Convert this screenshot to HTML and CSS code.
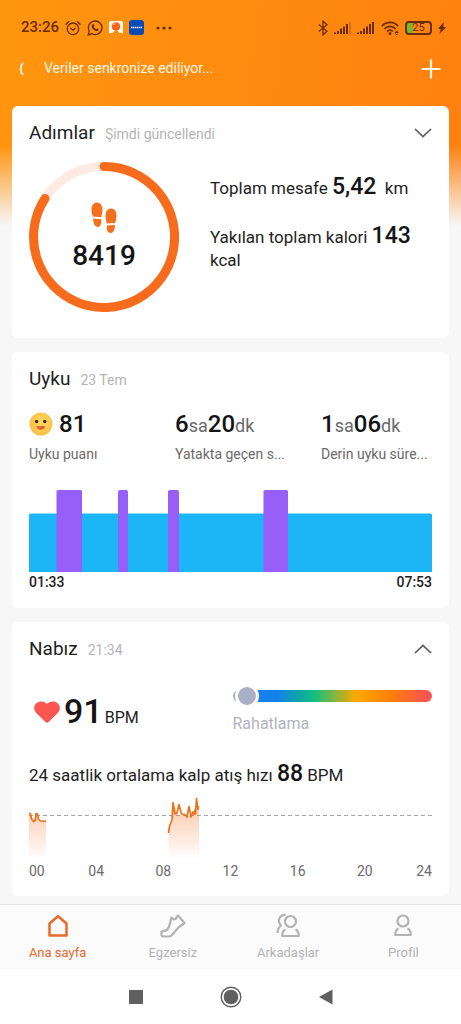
FILE: index.html
```html
<!DOCTYPE html>
<html lang="tr">
<head>
<meta charset="utf-8">
<meta name="viewport" content="width=device-width, initial-scale=1">
<title>Ana sayfa</title>
<link rel="stylesheet" href="styles.css">
</head>
<body>
<div class="status">
  <div class="status-left">
    <span class="clock">23:26</span>
    <svg width="16" height="16" viewBox="0 0 16 16" fill="none" stroke="currentColor" stroke-width="1.3" stroke-linecap="round"><circle cx="8" cy="8.8" r="5.8"/><path d="M1 4.2 3.8 1.6M15 4.2 12.2 1.6M5.6 8.2 8 10.2l2.4-2"/></svg>
    <svg width="16" height="16" viewBox="0 0 16 16" fill="none" stroke="currentColor" stroke-width="1.3"><path d="M1.2 14.8 2.2 11A6.8 6.8 0 1 1 5 13.8Z"/><path fill="currentColor" stroke="none" d="M5.6 4.3c.5-.4.9-.3 1.1.1l.6 1.4c.1.4-.4.8-.6 1 .5 1.1 1.4 1.9 2.5 2.4.3-.3.7-.9 1.1-.7l1.3.7c.4.2.3.7 0 1.1-.9 1.1-2.200.9-3.700.1-1.700-.9-3-2.400-3.200-4-.1-.9.3-1.600.9-2.100Z"/></svg>
    <svg width="14" height="14" viewBox="0 0 14 14"><path fill="#fffaf0" d="M2 0h10a2 2 0 0 1 2 2v10H0V2a2 2 0 0 1 2-2Z"/><path fill="#ff8a10" d="M4 12c0-1.500 1-2 3-2s3 .5 3 2Z"/><circle cx="7" cy="5.500" r="4.300" fill="#f4641b"/><path fill="#ffa33a" d="M3.500 4A4 4 0 0 1 7 1.500c0 2-1 3-3.500 2.500Z"/></svg>
    <svg width="15" height="15" viewBox="0 0 15 15"><rect width="15" height="15" rx="3" fill="#0b4bb3"/><path stroke="#e6eefb" stroke-width="1.500" stroke-dasharray="1.500 .5" d="M2 7.500h11"/></svg>
    <svg class="dots" width="16" height="4" viewBox="0 0 16 4" fill="currentColor"><circle cx="2" cy="2" r="1.600"/><circle cx="8" cy="2" r="1.600"/><circle cx="14" cy="2" r="1.600"/></svg>
  </div>
  <div class="status-right">
    <svg width="10" height="16" viewBox="0 0 10 16" fill="none" stroke="currentColor" stroke-width="1.300"><path d="M.8 4.500 9 11.200 5 14.800V1.200l4 3.600L.8 11.500"/></svg>
    <svg width="17" height="14" viewBox="0 0 17 14" fill="none" stroke="currentColor" stroke-width="2"><path d="M1 11.500V13M4 10v3M7 7.500V13M10 5.500V13M13 3v10"/><path opacity=".25" d="M16 1v12"/></svg>
    <svg width="18" height="14" viewBox="0 0 18 14" fill="none" stroke="currentColor" stroke-width="2"><path d="M1 11.500V13M4 10v3M7 7.500V13M10 5.500V13M13 3v10M16 1v12"/></svg>
    <svg width="18" height="14" viewBox="0 0 18 14" fill="none" stroke="currentColor" stroke-width="1.700"><path d="M.8 5.200C5.500.2 12.500.2 17.200 5.200M3.400 7.900c3.300-3.300 7.900-3.300 11.200 0M6 10.500c1.800-1.700 4.200-1.700 6 0"/><circle cx="9" cy="12.500" r=".7"/><path stroke-width="1" d="M14.500 11.500H17M17.200 11.500a1.500 1.500 0 1 0-.4 1.500"/></svg>
    <span class="battery"><span>25</span></span>
    <svg width="8" height="12" viewBox="0 0 8 12" fill="currentColor"><path d="M6 0 0 6.400l2.800.8L1.300 12 8 5.600 5.200 4.800Z"/></svg>
  </div>
</div>

<header class="topbar">
  <svg width="5" height="14" viewBox="0 0 5 14" fill="none" stroke="currentColor" stroke-width="1.800"><path d="M4 1C.8 4 .8 10 4 13"/></svg>
  <span class="sync">Veriler senkronize ediliyor...</span>
  <button class="icon-button" type="button" aria-label="Ekle"><svg width="20" height="20" viewBox="0 0 20 20" stroke="currentColor" stroke-width="2.200"><path d="M10 .5v19M.5 10h19"/></svg></button>
</header>

<main class="cards">
  <section class="card">
    <div class="card-head">
      <h2>Adımlar</h2><span class="when">Şimdi güncellendi</span>
      <button class="icon-button" type="button" aria-label="Genişlet"><svg width="18" height="10" viewBox="0 0 18 10" fill="none" stroke="currentColor" stroke-width="1.700"><path d="m1 1 8 7.500L17 1"/></svg></button>
    </div>
    <div class="steps">
      <div class="ring">
        <svg class="ring-art" width="150" height="150" viewBox="0 0 150 150" fill="none" stroke-width="9"><circle cx="75" cy="75" r="70.500" stroke="#fdebe3"/><path stroke="#f76b1c" stroke-linecap="round" d="M75 4.500A70.500 70.500 0 1 1 16 36.500"/></svg>
        <div class="ring-text">
          <svg width="26" height="32" viewBox="0 0 26 32" fill="#f4701f"><path d="M6 .5c3.500 0 5.500 3.500 5.500 7.500 0 3-1 5-1.200 7.300L1.800 14.500C1.200 12 .5 10.500.5 7.500.5 3.500 2.500.5 6 .5ZM2 16.500l8.200.8c.4 4-.5 7.700-3.500 7.700S2.300 21 2 16.500ZM20 6.500c3.500 0 5.500 3 5.500 7 0 3-.8 5-1.300 7.500l-8.500.6c-.3-2.600-1.200-4.600-1.200-7.600 0-4 2-7.500 5.500-7.500ZM15.800 23.600l8.200-.6c-.2 4.500-1.500 8-4.500 8s-4-3.500-3.700-7.400Z"/></svg>
          <strong>8419</strong>
        </div>
      </div>
      <div class="totals">
        <p>Toplam mesafe <strong>5,42</strong>&nbsp; km</p>
        <p>Yakılan toplam kalori <strong>143</strong> kcal</p>
      </div>
    </div>
  </section>

  <section class="card sleep">
    <div class="card-head"><h2>Uyku</h2><span class="when">23 Tem</span></div>
    <div class="stats">
      <div class="stat">
        <div class="value"><svg class="face" width="24" height="24" viewBox="0 0 24 24"><defs><radialGradient id="skin" cx=".55" cy=".45" r=".6"><stop offset="0" stop-color="#ffdc62"/><stop offset="1" stop-color="#f9bd42"/></radialGradient></defs><circle cx="12" cy="12" r="11.500" fill="url(#skin)"/><circle cx="7.600" cy="9.500" r="1.700" fill="#46260f"/><circle cx="15.800" cy="9.500" r="1.700" fill="#46260f"/><path fill="#e8592b" d="M7.300 14.300h8.800c-.6 4-7.600 5-8.800 0Z"/></svg><strong>81</strong></div>
        <div class="label">Uyku puanı</div>
      </div>
      <div class="stat">
        <div class="value"><strong>6</strong>sa<strong>20</strong>dk</div>
        <div class="label">Yatakta geçen s...</div>
      </div>
      <div class="stat">
        <div class="value"><strong>1</strong>sa<strong>06</strong>dk</div>
        <div class="label">Derin uyku süre...</div>
      </div>
    </div>
    <svg class="plot sleep-plot" viewBox="0 0 403 82" preserveAspectRatio="none" role="img" aria-label="Uyku evreleri"><path fill="#1cb6f7" d="M0 25q0-1.500 1.500-1.500h400q1.500 0 1.500 1.500v57H0Z"/><g fill="#985ef8"><path d="M27.500 82V1.500Q27.500 0 29 0h22.500Q53 0 53 1.500V82ZM89 82V2q0-2 2-2h6q2 0 2 2v80ZM139 82V2q0-2 2-2h7q2 0 2 2v80ZM234.500 82V1.500q0-1.500 1.500-1.500h21.500q1.500 0 1.500 1.500V82Z"/></g></svg>
    <div class="range"><span>01:33</span><span>07:53</span></div>
  </section>

  <section class="card pulse">
    <div class="card-head">
      <h2>Nabız</h2><span class="when">21:34</span>
      <button class="icon-button" type="button" aria-label="Daralt"><svg width="18" height="10" viewBox="0 0 18 10" fill="none" stroke="currentColor" stroke-width="1.700"><path d="m1 9 8-7.500L17 9"/></svg></button>
    </div>
    <div class="pulse-row">
      <div class="bpm">
        <svg width="26" height="22" viewBox="0 0 26 22" fill="#fb564f"><path d="M13 2.800C16 0 20.500-.5 23.500 2c3 2.700 3.200 7 .3 10L14.500 21q-1.500 1.300-3 0L2.200 12C-.7 9-.5 4.700 2.500 2 5.500-.5 10 0 13 2.800Z"/></svg>
        <strong>91</strong><span>BPM</span>
      </div>
      <div class="zone">
        <div class="zone-bar"><span class="knob"></span></div>
        <div class="zone-name">Rahatlama</div>
      </div>
    </div>
    <p class="average">24 saatlik ortalama kalp atış hızı <strong>88</strong> BPM</p>
    <svg class="plot pulse-plot" viewBox="0 0 403 64" preserveAspectRatio="none" role="img" aria-label="24 saatlik nabız"><defs><linearGradient id="fade" x1="0" y1="15" x2="0" y2="62" gradientUnits="userSpaceOnUse"><stop offset="0" stop-color="#f6823a" stop-opacity=".38"/><stop offset="1" stop-color="#f6823a" stop-opacity="0"/></linearGradient></defs>
      <path stroke="#a5a5a5" stroke-dasharray="4 3" d="M0 18.500h403"/>
      <path fill="url(#fade)" d="M0 18 2 16l2 8 3-8 2 7 8 1v38H0ZM139.500 36l4-14 1-14 5 10 10 1 6-4 2-10 2.500 9v48h-30.500Z"/>
      <g fill="none" stroke="#e9741c" stroke-width="1.700" stroke-linejoin="round"><path d="m0 16 1.500 1 1 5 2 2.500L6.500 23l.5-6.500 1.500.5 1 5 2 2 5.500.3"/><path d="M139.500 36 140.500 29 143 23 144 5.500 146 17 148 16 150 7.500 152.500 17 156 17.500 158 20 160 9.500 162 20 164 15 165 17 166 13 166.500 17 167.500 1.500 169 12.500 169.500 9"/></g></svg>
    <div class="hours"><span>00</span><span>04</span><span>08</span><span>12</span><span>16</span><span>20</span><span>24</span></div>
  </section>
</main>

<nav class="tabs">
  <a class="tab active" href="#home"><svg width="26" height="26" viewBox="0 0 26 26" fill="none" stroke="currentColor" stroke-width="2.500" stroke-linejoin="round"><path d="M4.500 22.500v-12L13 3.200l8.500 7.300v12Z"/></svg>Ana sayfa</a>
  <a class="tab" href="#workout"><svg width="26" height="26" viewBox="0 0 26 26" fill="none" stroke="currentColor" stroke-width="2.200" stroke-linejoin="round"><path d="M11.500 4.500 13.500 6.500 15.500 6 18 2.500 24.500 10 18.500 14.500 11.500 22.500Q10.500 23.500 9 23.500H3.500Q1.500 23.500 1.500 21.500V18.500Q8.500 18 9.500 12Z"/></svg>Egzersiz</a>
  <a class="tab" href="#friends"><svg width="26" height="26" viewBox="0 0 26 26" fill="none" stroke="currentColor" stroke-width="2.200" stroke-linejoin="round"><circle cx="15.500" cy="8.500" r="5.500"/><path d="M10.500 16.500c-2.500 1-3.300 3-3.300 6.500h16.600c0-3.500-1-5.500-3.300-6.500M10.500 1.800C6 1.500 3.500 5 4 8.500c.2 1.800 1 3 2 4-2.500 2-3.500 4-3.500 7.500"/></svg>Arkadaşlar</a>
  <a class="tab" href="#profile"><svg width="26" height="26" viewBox="0 0 26 26" fill="none" stroke="currentColor" stroke-width="2.200" stroke-linejoin="round"><circle cx="13" cy="8" r="5.500"/><path d="M8.500 15.500c-2.500 1-3.300 3-3.300 6.500h15.600c0-3.500-.8-5.500-3.300-6.500"/></svg>Profil</a>
</nav>

<div class="system">
  <button class="icon-button" type="button" aria-label="Son uygulamalar"><svg width="22" height="22" viewBox="0 0 22 22" fill="currentColor"><path d="M4 4h14v14H4Z"/></svg></button>
  <button class="icon-button" type="button" aria-label="Ana ekran"><svg width="22" height="22" viewBox="0 0 22 22" fill="currentColor"><circle cx="11" cy="11" r="9.800" fill="none" stroke="currentColor" stroke-width="1.400"/><circle cx="11" cy="11" r="7.300"/></svg></button>
  <button class="icon-button" type="button" aria-label="Geri"><svg width="22" height="22" viewBox="0 0 22 22" fill="currentColor"><path d="M17.500 3.500v15L4 11Z"/></svg></button>
</div>
</body>
</html>
```
FILE: styles.css
```css
* { box-sizing: border-box; }

body {
  margin: 0;
  min-height: 100vh;
  display: flex;
  flex-direction: column;
  font-family: Roboto, "Noto Sans", sans-serif;
  font-size: 16px;
  line-height: 21px;
  color: #1e1e1e;
  background:
    linear-gradient(to bottom, rgba(247, 247, 247, 0) 145px, #f7f7f7 226px),
    linear-gradient(100deg, #ff960f, #ff7a10);
}

h2, p { margin: 0; }
h2 { font-size: 19px; font-weight: 400; line-height: 30px; }
p { font-size: 17px; }
strong { font-size: 24px; font-weight: 500; line-height: 28px; color: #141414; }
p strong { font-size: 23px; }
svg { display: block; flex: none; }

.icon-button {
  display: flex;
  padding: 0;
  border: 0;
  background: none;
  color: inherit;
}

.status {
  display: flex;
  justify-content: space-between;
  padding: 16px 15px 0 21px;
  color: #6b2c08;
}
.status-left, .status-right { display: flex; align-items: center; height: 23px; }
.status-left { gap: 6px; }
.status-right { gap: 6px; }
.clock { font-size: 15px; font-weight: 500; }
.dots { margin-left: 6px; }
.battery {
  width: 27px;
  height: 14px;
  border: 2px solid currentColor;
  border-radius: 4px;
  background: linear-gradient(to right, #7cb928 25%, transparent 25%);
  font-size: 11px;
  line-height: 10px;
  text-align: center;
}
.battery span { display: block; }

.topbar {
  display: flex;
  align-items: center;
  height: 67px;
  padding: 0 20px 8px 19px;
  color: #fff6e4;
}
.sync { flex: 1; margin-left: 20px; font-size: 14px; }

.cards {
  flex: 1;
  display: flex;
  flex-direction: column;
  gap: 14px;
  padding: 0 12px 8px;
}
.card {
  padding: 12px 17px 26px;
  border-radius: 6px;
  background: #fff;
}
.card-head { display: flex; align-items: center; color: #5c5c5c; }
.card-head h2 { color: #1e1e1e; }
.when { flex: 1; margin: 3px 0 0 10px; font-size: 14px; color: #b5b5b5; }

.steps { display: flex; gap: 31px; margin-top: 14px; }
.ring { display: grid; flex: none; }
.ring-art, .ring-text { grid-area: 1 / 1; }
.ring-text {
  display: flex;
  flex-direction: column;
  align-items: center;
  gap: 4px;
  padding-top: 40px;
}
.ring-text strong { font-size: 28px; line-height: 36px; }
.totals { display: flex; flex-direction: column; gap: 21px; padding-top: 11px; }

.stats { display: grid; grid-template-columns: repeat(3, 1fr); gap: 35px; margin-top: 16px; }
.stat { white-space: nowrap; }
.value { height: 28px; font-size: 18px; line-height: 28px; color: #6a6a6a; }
.face { float: left; margin: 2px 6px 0 0; }
.label { margin-top: 6px; font-size: 14px; color: #6a6a6a; }
.plot { width: 100%; }
.sleep-plot { height: 82px; margin-top: 25px; }
.range { display: flex; justify-content: space-between; font-size: 14px; font-weight: 500; }
.sleep { padding-bottom: 15px; }

.pulse { padding-bottom: 14px; }
.pulse-row { display: grid; grid-template-columns: 1fr 1fr; margin-top: 24px; }
.bpm { display: flex; align-items: baseline; padding-left: 5px; }
.bpm strong { margin: 0 4px; font-size: 34px; line-height: 46px; }
.bpm span { margin-left: -2px; }
.zone { padding: 2px 0 0 2px; }
.zone-bar {
  position: relative;
  height: 12px;
  border-radius: 6px;
  background: linear-gradient(to right, #a9adc4 6%, #1f7ff0 10%, #0f80ea 22%, #12c07c 41%, #ffa800 62%, #ff7d0c 80%, #fb5550 97%);
}
.knob {
  position: absolute;
  left: 2px;
  top: -6px;
  width: 24px;
  height: 24px;
  border: 3px solid #fff;
  border-radius: 50%;
  background: #abafc6;
}
.zone-name { margin-top: 11px; color: #b1b3bf; }
.average { margin-top: 26px; }
.pulse-plot { height: 64px; margin-top: 9px; }
.hours {
  display: grid;
  grid-template-columns: 1fr 2fr 2fr 2fr 2fr 2fr 1fr;
  font-size: 14px;
  text-align: center;
  color: #6a6a6a;
}
.hours span:first-child { text-align: left; }
.hours span:last-child { text-align: right; }

.tabs {
  display: grid;
  grid-template-columns: repeat(4, 1fr);
  height: 65px;
  border-top: 1px solid #e4e4e4;
  background: #fbfbfb;
}
.tab {
  display: flex;
  flex-direction: column;
  align-items: center;
  gap: 4px;
  padding-top: 8px;
  font-size: 13px;
  line-height: 20px;
  text-decoration: none;
  color: #b3b3b3;
}
.tab.active { color: #e8692a; }

.system {
  display: flex;
  justify-content: center;
  align-items: center;
  gap: 73px;
  height: 55px;
  background: #fff;
  color: #606060;
}
```
